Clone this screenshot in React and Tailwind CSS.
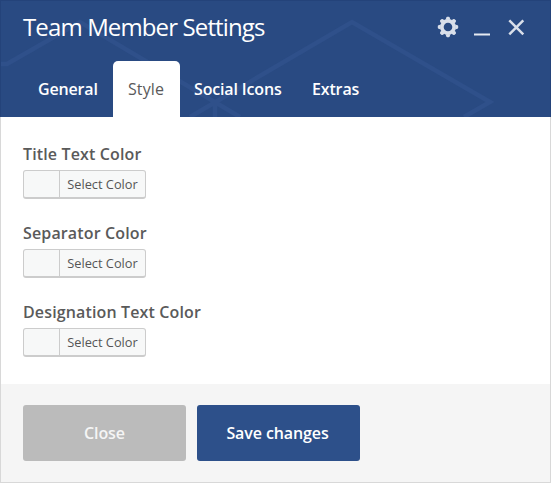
const tabs = ["General", "Style", "Social Icons", "Extras"];
const tabStyles = {
  General: "w-[90px] pl-[15px] tracking-[-0.15px]",
  Style: "w-[67px] pl-[15px] tracking-[0.1px]",
  "Social Icons": "w-[118px] pl-[14px] tracking-[-0.15px]",
  Extras: "w-[80px] pl-[14px] tracking-[-0.15px]",
};
const fields = ["Title Text Color", "Separator Color", "Designation Text Color"];

function GearIcon() {
  const teeth = [0, 45, 90, 135, 180, 225, 270, 315];
  return (
    <svg width="22" height="22" viewBox="-11 -11 22 22" className="block">
      <circle r="6.1" fill="none" stroke="#d9dfea" strokeWidth="3.6" />
      {teeth.map((a) => (
        <path key={a} d="M-2.4 -7.2L-1.7 -9.5Q-1.5 -10.2 -0.8 -10.2H0.8Q1.5 -10.2 1.7 -9.5L2.4 -7.2Z" fill="#d9dfea" transform={`rotate(${a})`} />
      ))}
    </svg>
  );
}

function Header() {
  return (
    <header className="relative h-[117px] shrink-0 overflow-hidden bg-[#294a82]">
      <svg className="absolute inset-0" width="551" height="117" fill="none" stroke="#2f508a" strokeWidth="4.5">
        <path d="M0 64H7L80 22L240 117M190 117L352 22L490 102L464 117M215 102V117" />
      </svg>
      <div className="relative flex h-[61px] items-start justify-between">
        <h1 className="ml-[23px] mt-[11px] whitespace-nowrap text-[24px] font-normal leading-[32px] tracking-[-0.87px] text-white">Team Member Settings</h1>
        <div className="mr-6 mt-4 flex">
          <GearIcon />
          <svg width="68" height="22" className="block" fill="none" stroke="#d9dfea">
            <path d="M15 18.5H31" stroke="#e6eaf2" strokeWidth="2" />
            <path d="M50.3 4.3L64.3 18.3M64.3 4.3L50.3 18.3" strokeWidth="2.5" />
          </svg>
        </div>
      </div>
      <nav className="relative ml-[23px] flex h-[56px]">
        {tabs.map((t) => (
          <button
            key={t}
            className={`${tabStyles[t]} whitespace-nowrap text-left text-[16px] ${
              t === "Style" ? "rounded-t-[5px] bg-white text-[#5a5a5a]" : "font-semibold text-white"
            }`}
          >
            {t}
          </button>
        ))}
      </nav>
      <div className="pointer-events-none absolute inset-0 border border-b-0 border-[#24437a]" />
    </header>
  );
}

function ColorField({ label }) {
  return (
    <div className="h-[79px]">
      <div className="h-[27px] whitespace-nowrap text-[16px] font-semibold leading-[22px] tracking-[0.14px] text-[#5a5a5a]">{label}</div>
      <button className="flex h-[29px] w-[123px] overflow-hidden rounded-[3px] border border-b-2 border-[#ccc] bg-[#f7f8f8] text-[12.8px] leading-[26px] text-[#555]">
        <span className="h-full w-[36px] border-r border-[#ccc]" />
        <span className="flex-1 whitespace-nowrap text-center">Select Color</span>
      </button>
    </div>
  );
}

export default function App() {
  return (
    <div className="flex h-[483px] w-[551px] flex-col bg-white font-['Open_Sans',sans-serif]">
      <Header />
      <main className="h-[267px] shrink-0 border-x border-[#d8d8d8] pl-[22px] pt-[26px]">
        {fields.map((f) => (
          <ColorField key={f} label={f} />
        ))}
      </main>
      <footer className="flex h-[99px] gap-[11px] border border-t-0 border-[#d8d8d8] bg-[#f5f5f5] pl-[22px] pt-[21px]">
        <button className="h-[56px] w-[163px] rounded-[3px] bg-[#bbb] text-[16px] font-semibold tracking-[-0.1px] text-[#f5f5f5]">Close</button>
        <button className="h-[56px] w-[163px] rounded-[3px] bg-[#2d508a] pr-[2px] text-[16px] font-semibold tracking-[-0.1px] text-white">Save changes</button>
      </footer>
    </div>
  );
}
